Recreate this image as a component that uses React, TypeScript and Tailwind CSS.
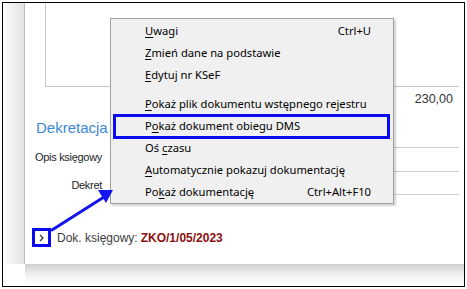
import React from "react";

type Item = { pre: string; key: string; post: string; shortcut?: string; sepBefore?: boolean };

const items: Item[] = [
  { pre: "", key: "U", post: "wagi", shortcut: "Ctrl+U" },
  { pre: "", key: "Z", post: "mień dane na podstawie" },
  { pre: "", key: "E", post: "dytuj nr KSeF" },
  { pre: "", key: "P", post: "okaż plik dokumentu wstępnego rejestru", sepBefore: true },
  { pre: "P", key: "o", post: "każ dokument obiegu DMS" },
  { pre: "Oś ", key: "c", post: "zasu" },
  { pre: "", key: "A", post: "utomatycznie pokazuj dokumentację" },
  { pre: "Po", key: "k", post: "aż dokumentację", shortcut: "Ctrl+Alt+F10" },
];

function ContextMenu() {
  return (
    <div className="absolute left-[110px] top-[18px] w-[284px] h-[186px] bg-[#f0f0f0] border border-[#a0a0a0] shadow-[2px_2px_2px_rgba(0,0,0,0.18)] pt-[1px] font-['Noto_Sans',sans-serif] text-[11.2px] text-black">
      {items.map((it, i) => (
        <React.Fragment key={i}>
          {it.sepBefore && <div className="h-[7px]" />}
          <div className="flex items-center h-[22px] pl-[34px] pr-[22px]">
            <span className="flex-1 whitespace-nowrap">
              {it.pre}
              <span className="underline underline-offset-2">{it.key}</span>
              {it.post}
            </span>
            {it.shortcut && <span className="whitespace-nowrap">{it.shortcut}</span>}
          </div>
        </React.Fragment>
      ))}
      {/* highlight around DMS item */}
      <div className="absolute left-[2px] top-[95px] w-[277px] h-[25px] border-[3px] border-[#0a0af0]" />
    </div>
  );
}

function Arrow() {
  return (
    <svg className="absolute left-0 top-0 pointer-events-none" width="467" height="289" viewBox="0 0 467 289">
      <line x1="52" y1="230" x2="104" y2="197" stroke="#1414ee" strokeWidth="3" strokeLinecap="round" />
      <polygon points="113,190 98,190 106,203" fill="#1414ee" />
    </svg>
  );
}

export default function App() {
  return (
    <div className="relative w-[467px] h-[289px] bg-white overflow-hidden font-['Liberation_Sans',Arial,sans-serif]">
      <div className="p-[2px]">
        <div className="w-[463px] h-[285px] border border-black flex flex-col">
          <div className="flex h-[261px]">
            {/* left gradient strip */}
            <div className="w-[22px] bg-gradient-to-r from-[#fdfdfd] to-[#e2e2e2] border-r border-[#bdbdbd]" />
            {/* main panel */}
            <div className="flex-1 flex flex-col">
              <div className="ml-[20px] mr-[5px] h-[84px] border-l border-b border-[#c8c8c8]" />
              <div className="flex flex-1">
                <div className="flex-1 flex flex-col">
                  <div className="mt-[31px] pl-[11px] text-[15px] leading-[20px] text-[#3b88d6]">
                    Dekretacja
                  </div>
                  <div className="mt-[12px] w-[77px] text-right text-[11px] leading-[14px] text-[#1e1e1e] tracking-[-0.3px]">
                    Opis księgowy
                  </div>
                  <div className="mt-[14px] w-[77px] text-right text-[11px] leading-[14px] text-[#1e1e1e] tracking-[-0.3px]">
                    Dekret
                  </div>
                  <div className="mt-[36px] pl-[7px] flex items-center gap-[6px] text-[12px]">
                    <div className="w-[19px] h-[19px] border-[3px] border-[#0a0af0] flex items-center justify-center">
                      <svg width="5" height="8" viewBox="0 0 5 8">
                        <path d="M1 1 L4 4 L1 7" stroke="#333" strokeWidth="1.2" fill="none" />
                      </svg>
                    </div>
                    <span className="text-[#3c3c3c]">Dok. księgowy:</span>
                    <span className="font-bold text-[#8b1010] -ml-[3px]">ZKO/1/05/2023</span>
                  </div>
                </div>
                <div className="w-[65px] mr-[5px] flex flex-col">
                  <div className="h-[61px] border-b border-[#d0d0d0] text-right pr-[6px] pt-[5px] text-[12.5px] leading-[14px] text-[#333]">
                    230,00
                  </div>
                  <div className="h-[24px] border-b border-[#d0d0d0]" />
                  <div className="h-[23px] border-b border-[#d0d0d0]" />
                </div>
              </div>
            </div>
          </div>
          {/* bottom shadow */}
          <div className="flex-1 flex">
            <div className="w-[22px]" />
            <div className="flex-1 bg-gradient-to-b from-[#cfcfcf] via-[#f2f2f2] to-white" />
          </div>
        </div>
      </div>
      <ContextMenu />
      <Arrow />
    </div>
  );
}
